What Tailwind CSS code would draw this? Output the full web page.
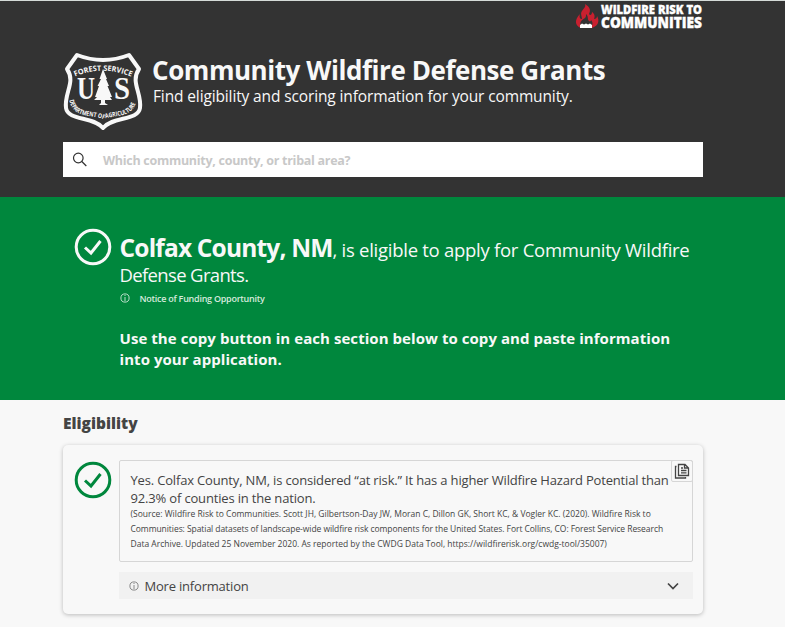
<!DOCTYPE html>
<html lang="en">
  <head>
    <meta charset="UTF-8" />
    <meta name="viewport" content="width=device-width, initial-scale=1.0" />
    <title>Community Wildfire Defense Grants</title>
    <script src="https://cdn.jsdelivr.net/npm/@tailwindcss/browser@4"></script>
  </head>
  <body class="h-[627px] overflow-hidden bg-[#f8f8f8] font-['Open_Sans','Noto_Sans',sans-serif] text-[#444] whitespace-nowrap">
    <header class="h-[197px] bg-[#333] border-t border-[#d5dbd8] pl-[63px] text-[#f8f8f8]">
      <div class="w-[640px]">
        <div class="flex justify-end h-[50px]">
          <svg class="w-[130px] h-8 overflow-visible" viewBox="0 0 130 32">
            <path fill="#c8202f" d="M8 27C2 25 1 19 7 13C6 16 7 18 9 18C9 15 7 13 9 10C11 7 13 6 12 3C17 6 18 9 16 13C17 15 19 14 19 11C22 13 22 16 21 18C23 18 24 17 24 15C27 20 25 25 19 27Z" />
            <path fill="#333" d="M8 25C6 21 9 19 12 17C13 16 13 15 13 13C16 16 14 18 16 20C17 21 18 20 18 19C20 21 20 24 18 25Z" />
            <path fill="#fff" d="M7 27V24L9 22.5L11 23.5L13 22.5L15 23.5L17 22.5L19 24V27Z" />
            <g fill="#fff" stroke="#fff" stroke-width=".4" class="font-['Open_Sans',sans-serif] font-extrabold">
              <text x="28" y="13" font-size="12.5" textLength="101" lengthAdjust="spacingAndGlyphs">WILDFIRE RISK TO</text>
              <text x="28" y="27" font-size="15.5" textLength="101" lengthAdjust="spacingAndGlyphs">COMMUNITIES</text>
            </g>
          </svg>
        </div>
        <div class="flex h-[91px]">
          <svg class="w-[80px] h-[80px] shrink-0 overflow-visible" viewBox="0 0 80 80">
            <path fill="none" stroke="#f8f8f8" stroke-width="4" stroke-linejoin="round" d="M14 4Q40 14 66 4L76 18C67 31 79 42 77 57C75 70 50 65 40 77C30 65 5 70 3 57C1 42 13 31 4 18Z" />
            <path id="top-arc" fill="none" d="M11 26Q40 13 71 27" />
            <path id="bottom-arc" fill="none" d="M6 47C9 68 26 63 40 68C54 63 71 68 74 47" />
            <g fill="#f8f8f8" class="font-['Open_Sans',sans-serif] font-bold">
              <text font-size="7.5"><textPath href="#top-arc" startOffset="1" textLength="58" lengthAdjust="spacingAndGlyphs">FOREST SERVICE</textPath></text>
              <text font-size="6.5"><textPath href="#bottom-arc" startOffset="2" textLength="80" lengthAdjust="spacingAndGlyphs">DEPARTMENT OF AGRICULTURE</textPath></text>
            </g>
            <g fill="#f8f8f8" class="font-['Liberation_Serif',serif] font-bold">
              <text x="14" y="48" font-size="32" textLength="18" lengthAdjust="spacingAndGlyphs">U</text>
              <text x="51" y="48" font-size="32" textLength="16" lengthAdjust="spacingAndGlyphs">S</text>
            </g>
            <path fill="#f8f8f8" d="M40 18L44 28L43 28L46 35L44.500 35L49 46L47 46L49 49H42V52L45 54H36L38 52V49H31L34 46H32L36 35H34.500L38 28H36.500Z" />
          </svg>
          <div class="pl-[9px]">
            <h1 class="mt-px text-[26px] leading-9 font-bold tracking-[-0.44px]">Community Wildfire Defense Grants</h1>
            <p class="mt-[-4px] pl-px text-[15.5px] leading-6 tracking-[-0.13px]">Find eligibility and scoring information for your community.</p>
          </div>
        </div>
        <div class="flex items-center h-[35px] bg-white">
          <svg class="ml-[9px] w-4 h-4" viewBox="0 0 16 16" fill="none" stroke="#333" stroke-width="1.2">
            <circle cx="6.3" cy="6" r="4.8" />
            <path d="M9.8 9.5L14.3 14" />
          </svg>
          <span class="ml-[15px] pt-[3px] text-[12.5px] font-bold tracking-[-0.28px] text-[#c8c8c8]">Which community, county, or tribal area?</span>
        </div>
      </div>
    </header>

    <section class="flex h-[203px] bg-[#00873d] pl-[74px] pt-[31px] text-[#f8f8f8]">
      <svg class="w-[38px] h-[38px] shrink-0" viewBox="0 0 38 38" fill="none" stroke="#f8f8f8" stroke-width="3">
        <circle cx="19" cy="19" r="16.8" />
        <path d="M11 19.5L17 25L26.5 13" />
      </svg>
      <div class="pl-[7.5px] pt-[7px]">
        <p class="text-[18.5px] leading-[25px]"><strong class="text-[24.5px] tracking-[-0.82px]">Colfax County, NM</strong><span class="tracking-[-0.27px]">, is eligible to apply for Community Wildfire</span><br /><span class="tracking-[-0.65px]">Defense Grants.</span></p>
        <div class="mt-[3px] flex items-center h-4">
          <svg class="w-[10px] h-[10px]" viewBox="0 0 10 10" fill="none" stroke="#b8dec8">
            <circle cx="5" cy="5" r="4.1" />
            <path d="M5 2V3M5 4V8" />
          </svg>
          <span class="ml-[10px] pt-px text-[9px] font-semibold tracking-[-0.26px] text-[#d5eadc]">Notice of Funding Opportunity</span>
        </div>
        <p class="mt-[22px] text-[15px] leading-[21px] font-bold tracking-[0.06px]">Use the copy button in each section below to copy and paste information<br />into your application.</p>
      </div>
    </section>

    <main class="ml-[63px] w-[640px] pt-[11px]">
      <h2 class="text-[15.5px] leading-6 font-extrabold">Eligibility</h2>
      <div class="mt-[10px] flex h-[169px] rounded-[5px] bg-[#f8f8f8] pl-[11px] pt-[15px] shadow-[0_1px_4px_rgba(0,0,0,0.25)]">
        <svg class="mt-[1px] w-[38px] h-[38px] shrink-0" viewBox="0 0 38 38" fill="none" stroke="#00873d" stroke-width="3">
          <circle cx="19" cy="19" r="16.8" />
          <path d="M11 19.5L17 25L26.5 13" />
        </svg>
        <div class="ml-[7px] w-[574px]">
          <div class="relative h-[102px] rounded-[2px] border border-[#d6d6d6] pl-[10.5px] pt-[10px]">
            <p class="text-[13px] leading-[18px] tracking-[-0.17px]">Yes. Colfax County, NM, is considered “at risk.” It has a higher Wildfire Hazard Potential than<br />92.3% of counties in the nation.</p>
            <p class="mt-[-1px] text-[8.5px] leading-[15px]">(Source: Wildfire Risk to Communities. Scott JH, Gilbertson-Day JW, Moran C, Dillon GK, Short KC, &amp; Vogler KC. (2020). Wildfire Risk to<br /><span class="tracking-[-0.06px]">Communities: Spatial datasets of landscape-wide wildfire risk components for the United States. Fort Collins, CO: Forest Service Research</span><br />Data Archive. Updated 25 November 2020. As reported by the CWDG Data Tool, https://wildfirerisk.org/cwdg-tool/35007)</p>
            <button class="absolute -top-px -right-px flex h-[22px] w-[22px] items-center justify-center rounded-[2px] border border-[#d6d6d6]">
              <svg class="w-4 h-4" viewBox="0 0 16 16" fill="none" stroke="#444" stroke-width="1.3">
                <path d="M4.500 1.500H11L14.500 5V12.500H4.500ZM10.500 1.500V5H14M7 5H9M7 7.500H12.500M7 9.800H12.500" />
                <path d="M2.500 3.500H1.500V15H11.500V14" />
              </svg>
            </button>
          </div>
          <div class="mt-[10px] flex h-[27px] items-center bg-[#f1f1f1] pl-[10px] pr-[14px]">
            <svg class="w-[10px] h-[10px]" viewBox="0 0 10 10" fill="none" stroke="#888">
              <circle cx="5" cy="5" r="4.1" />
              <path d="M5 2V3M5 4V8" />
            </svg>
            <span class="ml-[5.5px] pt-0.5 text-[13px] tracking-[-0.2px]">More information</span>
            <svg class="ml-auto w-3 h-3" viewBox="0 0 12 12" fill="none" stroke="#444" stroke-width="1.7">
              <path d="M1 3.5L6 8.5L11 3.5" />
            </svg>
          </div>
        </div>
      </div>
    </main>
  </body>
</html>
